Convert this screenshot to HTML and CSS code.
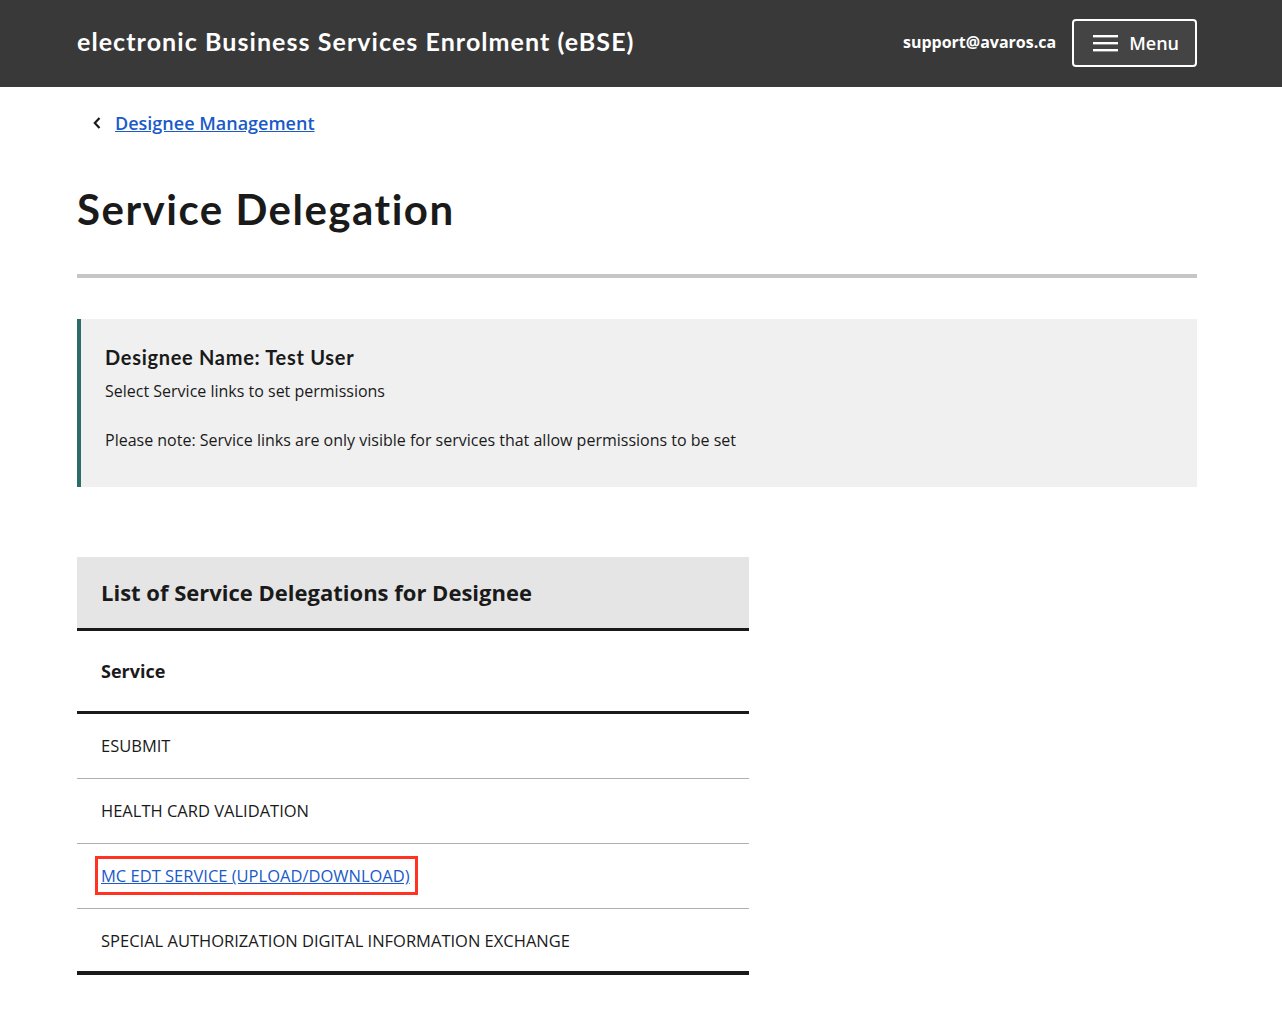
FILE: index.html
```html
<!DOCTYPE html>
<html lang="en">
<head>
<meta charset="utf-8">
<title>Service Delegation</title>
<link rel="stylesheet" href="styles.css">
</head>
<body>
<header class="topbar">
  <div class="topbar-inner">
    <div class="app-title">electronic Business Services Enrolment (eBSE)</div>
    <div class="topbar-right">
      <span class="support">support@avaros.ca</span>
      <button class="menu-btn" type="button">
        <svg class="menu-icon" width="25" height="18" viewBox="0 0 25 18" aria-hidden="true">
          <rect x="0" y="1" width="25" height="2.4" fill="#fff"/>
          <rect x="0" y="8" width="25" height="2.4" fill="#fff"/>
          <rect x="0" y="15" width="25" height="2.4" fill="#fff"/>
        </svg>
        <span>Menu</span>
      </button>
    </div>
  </div>
</header>
<main class="page">
  <nav class="back">
    <svg class="chev" width="10" height="14" viewBox="0 0 10 14" aria-hidden="true">
      <path d="M7.5 2 L2.8 7 L7.5 12" fill="none" stroke="#1a1a1a" stroke-width="2.2"/>
    </svg>
    <a href="#" class="link back-link">Designee Management</a>
  </nav>
  <h1 class="page-title">Service Delegation</h1>
  <hr class="divider">
  <section class="callout">
    <h2 class="callout-title">Designee Name: Test User</h2>
    <p class="callout-text">Select Service links to set permissions</p>
    <p class="callout-text">Please note: Service links are only visible for services that allow permissions to be set</p>
  </section>
  <table class="svc-table">
    <caption class="svc-caption">List of Service Delegations for Designee</caption>
    <thead>
      <tr><th>Service</th></tr>
    </thead>
    <tbody>
      <tr><td>ESUBMIT</td></tr>
      <tr><td>HEALTH CARD VALIDATION</td></tr>
      <tr><td><a href="#" class="link highlight">MC EDT SERVICE (UPLOAD/DOWNLOAD)</a></td></tr>
      <tr><td>SPECIAL AUTHORIZATION DIGITAL INFORMATION EXCHANGE</td></tr>
    </tbody>
  </table>
</main>
</body>
</html>
```
FILE: styles.css
```css
* { box-sizing: border-box; }
html, body { margin: 0; padding: 0; background: #fff; }
body {
  font-family: "Open Sans", "Liberation Sans", sans-serif;
  color: #1a1a1a;
}
.topbar {
  background: #393939;
  height: 87px;
}
.topbar-inner {
  width: 1120px;
  margin-left: 77px;
  height: 100%;
  display: flex;
  align-items: center;
  justify-content: space-between;
}
.app-title {
  font-family: "Lato", "Open Sans", sans-serif;
  font-weight: 700;
  font-size: 25px;
  color: #fff;
  letter-spacing: 1.07px;
  margin-bottom: 5px;
}
.topbar-right {
  display: flex;
  align-items: center;
  gap: 16px;
}
.support {
  color: #fff;
  font-weight: 700;
  font-size: 16px;
  margin-bottom: 4px;
}
.menu-btn {
  display: flex;
  align-items: center;
  gap: 11px;
  height: 48px;
  padding: 0 16px 0 19px;
  margin-bottom: 2px;
  background: #444;
  border: 2px solid #fff;
  border-radius: 4px;
  color: #fff;
  font-family: "Open Sans", sans-serif;
  font-weight: 600;
  font-size: 18px;
}
.menu-icon { display: block; }
.page {
  width: 1120px;
  margin-left: 77px;
}
.back {
  display: flex;
  align-items: center;
  gap: 13px;
  padding-left: 15px;
  margin-top: 24px;
  height: 24px;
}
.chev { display: block; }
.link {
  color: #1a5ac9;
  text-decoration: underline;
}
.back-link {
  font-size: 18px;
  font-weight: 600;
}
.page-title {
  font-family: "Lato", "Open Sans", sans-serif;
  font-weight: 700;
  font-size: 42px;
  letter-spacing: 1.5px;
  margin: 49px 0 0;
  line-height: 1.2;
}
.divider {
  border: 0;
  height: 4px;
  background: #c6c6c6;
  margin: 40px 0 0;
}
.callout {
  margin-top: 41px;
  background: #f0f0f0;
  border-left: 4px solid #2c6c68;
  padding: 26px 24px 26px 24px;
  min-height: 168px;
}
.callout-title {
  font-family: "Lato", "Open Sans", sans-serif;
  font-weight: 700;
  font-size: 20px;
  letter-spacing: 0.7px;
  margin: 0 0 10px;
}
.callout-text {
  font-size: 16px;
  margin: 0 0 25px;
  line-height: 1.5;
}
.callout-text:last-child { margin-bottom: 0; }
.svc-table {
  margin-top: 70px;
  width: 672px;
  border-collapse: collapse;
}
.svc-caption {
  text-align: left;
  background: #e5e5e5;
  font-weight: 700;
  font-size: 22px;
  padding: 0 24px;
  height: 74px;
  line-height: 71px;
  border-bottom: 3px solid #1a1a1a;
}
.svc-table th {
  text-align: left;
  font-size: 18px;
  font-weight: 700;
  padding: 0 24px;
  height: 81px;
  border-bottom: 3px solid #1a1a1a;
}
.svc-table td {
  font-size: 16.5px;
  padding: 0 24px;
  height: 65px;
  border-bottom: 1px solid #b0b0b0;
}
.svc-table tbody tr:first-child td { height: 66px; }
.svc-table tbody tr:last-child td {
  border-bottom: 4px solid #1a1a1a;
}
.highlight {
  padding: 2px 2px 2px 0;
  outline: 3px solid #ff3322;
  outline-offset: 3px;
}
```
